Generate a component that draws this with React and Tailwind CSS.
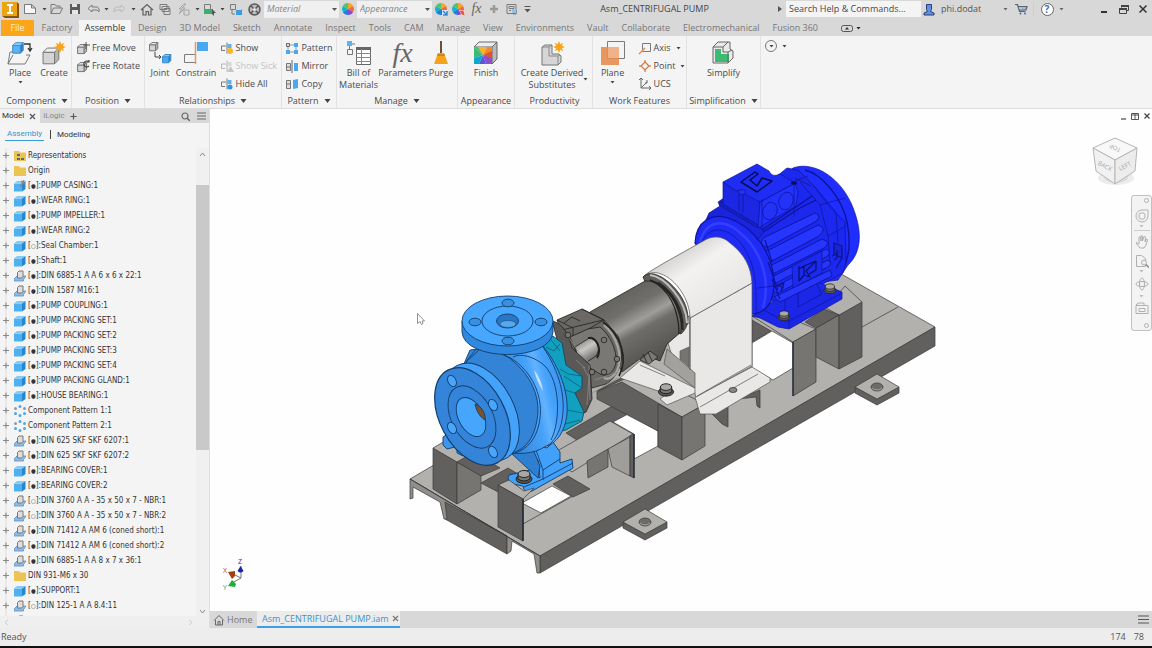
import React from "react";

const UI = "font-['Open_Sans','Noto_Sans',sans-serif]";

/* ---------- small helpers ---------- */
function Svg({ w, h, children, className = "" }) {
  return (
    <svg width={w} height={h} viewBox={`0 0 ${w} ${h}`} fill="none" className={`shrink-0 ${className}`} aria-hidden="true">
      {children}
    </svg>
  );
}

function Caret({ small, color = "#444" }) {
  return small ? (
    <Svg w={5} h={3}><path d="M0.500 0h4L2.500 2.500z" fill={color} /></Svg>
  ) : (
    <Svg w={7} h={4}><path d="M0.500 0h6L3.500 4z" fill={color} /></Svg>
  );
}

function Tool({ label, className, children }) {
  return (
    <button type="button" aria-label={label} className={`flex h-full shrink-0 items-center justify-center ${className}`}>
      {children}
    </button>
  );
}

function Wheel({ badge }) {
  return (
    <Svg w={14} h={14}>
      <path d="M7 7 7 1A6 6 0 0 1 12.200 4z" fill="#f6a623" />
      <path d="M7 7 12.200 4A6 6 0 0 1 12.200 10z" fill="#ee6a3c" />
      <path d="M7 7 12.200 10A6 6 0 0 1 7 13z" fill="#7d4bd0" />
      <path d="M7 7 7 13A6 6 0 0 1 1.800 10z" fill="#1f7fe0" />
      <path d="M7 7 1.800 10A6 6 0 0 1 1.800 4z" fill="#12b3c4" />
      <path d="M7 7 1.800 4A6 6 0 0 1 7 1z" fill="#52c46c" />
      {badge === "blue" && <path d="M8 8h6v6H8z" fill="#d9e8f5" />}
      {badge === "blue" && <path d="M9 9l4 4M13 9v4H9" stroke="#2f8ad6" strokeWidth="1.500" />}
      {badge === "red" && <path d="M8 8l5 1 1 5-3-1z" fill="#e8542f" stroke="#fff" strokeWidth="0.500" />}
    </Svg>
  );
}

const g = "#7a7a7a";

/* ---------- title bar ---------- */
function TitleSelect({ label }) {
  return (
    <div className="relative h-[17px] w-[75px] shrink-0">
      <select aria-label={label} className="block h-full w-full appearance-none bg-[#f0f0f0] pl-[3px] text-[9px] leading-4 text-[#858585] italic">
        <option>{label}</option>
      </select>
      <span className="pointer-events-none absolute top-[7px] right-[2px]"><Svg w={5} h={3}><path d="M0 0h5L2.500 3z" fill="#555" /></Svg></span>
    </div>
  );
}

function TitleBar() {
  return (
    <header className="flex h-[18px] shrink-0 items-center">
      <Tool label="Inventor" className="w-5">
        <Svg w={18} h={18}>
          <path d="M1 2h15v14H1z" fill="#eda414" />
          <path d="M16 2l2 2v14H4l-3-2h15z" fill="#8a5406" />
          <path d="M6 4h6v2h-2v6h2v2H6v-2h2V6H6z" fill="#fff" />
        </Svg>
      </Tool>
      <Tool label="New" className="w-5"><Svg w={14} h={12}><path d="M1.500 1.500h7l4 3.500v5.500h-11zM8.500 1.500v3.500h4" stroke={g} fill="#f7f7f7" /></Svg></Tool>
      <Tool label="New options" className="w-2"><Caret small /></Tool>
      <Tool label="Open" className="w-4"><Svg w={13} h={12}><path d="M1 10.500v-9h4l1 1.500h4v2M1 10.500l2.500-5.500h9L10 10.500z" stroke={g} /></Svg></Tool>
      <Tool label="Save" className="w-[22px]"><Svg w={12} h={12}><path d="M1 1h10v10H1z" fill="#5c5c5c" /><path d="M3 1h5v3H3zM3 7h6v4H3z" fill="#e6e6e6" /></Svg></Tool>
      <Tool label="Undo" className="w-[15px]"><Svg w={13} h={10}><path d="M5 1 1 4.500 5 8V6h5l2 2V5l-1.500-2H5z" stroke={g} /></Svg></Tool>
      <Tool label="Undo options" className="w-[10px]"><Caret small /></Tool>
      <Tool label="Redo" className="w-[17px]"><Svg w={13} h={10}><path d="M8 1l4 3.500L8 8V6H3L1 8V5l1.500-2H8z" stroke="#bababa" /></Svg></Tool>
      <Tool label="Redo options" className="w-[10px]"><Caret small /></Tool>
      <Tool label="Home" className="w-[18px]"><Svg w={14} h={13}><path d="M1 7 7 1.500 13 7M3 6v6h3V8.500h2.500V12H11V6" stroke="#5f5f5f" strokeWidth="1.200" /></Svg></Tool>
      <Tool label="Documents" className="w-[18px]"><Svg w={12} h={12}><path d="M1 1.500h7v5H1zM3 3.500h7v5H3zM5 5.500h6v6H5z" stroke={g} fill="#dedede" /></Svg></Tool>
      <Tool label="Update" className="w-[18px]"><Svg w={13} h={13}><path d="M7 1 2 6h3L2 11l6-6H5l4-4z" stroke="#a5a5a5" /><path d="M7 7h5v5H7z" stroke="#a5a5a5" /></Svg></Tool>
      <Tool label="Update options" className="w-[10px]"><Caret small /></Tool>
      <Tool label="Select" className="w-[15px]"><Svg w={13} h={13}><path d="M1.500 1.500h6v9h-6z" stroke={g} /><path d="M1 6h9v5H1z" fill="#3bb06c" /><path d="M9 6l4 4-2 0 0 3-2-2z" fill="#555" /></Svg></Tool>
      <Tool label="Select options" className="w-[10px]"><Caret small /></Tool>
      <Tool label="Return" className="w-[18px]"><Svg w={14} h={13}><path d="M1.500 1.500h5v5h-5zM3 7v4h3" stroke={g} /><path d="M7 7h5l1-1v6H7z" fill="#3b9be0" /></Svg></Tool>
      <Tool label="Material browser" className="w-[19px]"><Svg w={13} h={13}><circle cx="6.500" cy="6.500" r="5.500" stroke="#5a5a5a" strokeWidth="1.500" fill="#bdbdbd" /><path d="M3 3l7 7M10 3l-7 7" stroke="#5a5a5a" strokeWidth="1.500" /><circle cx="6.500" cy="6.500" r="1.500" fill="#eee" /></Svg></Tool>
      <TitleSelect label="Material" />
      <Tool label="Appearance browser" className="w-[18px]"><Wheel /></Tool>
      <TitleSelect label="Appearance" />
      <Tool label="Adjust" className="w-[17px]"><Wheel badge="blue" /></Tool>
      <Tool label="Clear" className="w-[18px]"><Wheel badge="red" /></Tool>
      <Tool label="Parameters" className="w-[19px]"><span className="font-['Liberation_Serif',serif] text-[14px] leading-4 text-[#666] italic">fx</span></Tool>
      <Tool label="Add" className="w-4"><Svg w={10} h={10}><path d="M5 1v8M1 5h8" stroke="#9a9a9a" strokeWidth="2.500" /></Svg></Tool>
      <Tool label="Snap" className="w-[19px]"><Svg w={12} h={12}><path d="M1 1.500h9v9H1zM3 3.500h5v2H3zM3 7.500h2M10 7v4H7" stroke={g} /><path d="M6 6h4v4H6z" fill="#8fc3ec" /></Svg></Tool>
      <Tool label="Customize" className="w-3"><Svg w={7} h={7}><path d="M0.500 0h6v1h-6zM0.500 3h6l-3 3.500z" fill="#555" /></Svg></Tool>

      <h1 className="min-w-0 flex-1 truncate text-center text-[9px] leading-4 text-[#444]">Asm_CENTRIFUGAL PUMP</h1>

      <Tool label="Show search" className="mr-[2px] w-2"><Svg w={4} h={6}><path d="M0 0l4 3-4 3z" fill="#555" /></Svg></Tool>
      <input aria-label="Search Help and Commands" placeholder="Search Help & Commands..." className="h-4 w-[135px] shrink-0 bg-[#f4f4f4] pl-[3px] text-[9px] leading-4 placeholder:text-[#4a4a4a]" />
      <Tool label="Account" className="w-4">
        <Svg w={12} h={13}><path d="M3.500 1.500h5v5l-1 2 3.500 1.500v2H1v-2l3.500-1.500-1-2z" fill="#5f8fe6" stroke="#27406f" /></Svg>
      </Tool>
      <span className="w-[60px] shrink-0 pl-1 text-[9px] leading-4 text-[#555]">phi.dodat</span>
      <Tool label="Account options" className="w-4"><Caret small color="#666" /></Tool>
      <Tool label="App store" className="w-4"><Svg w={13} h={12}><path d="M0 1.500h2.500l2 7h6M3 3.500h9l-1 3.500H4" stroke="#5a6572" strokeWidth="1.200" fill="#a9b9ca" /><circle cx="5.500" cy="10.500" r="1" fill="#3f6fa8" /><circle cx="10" cy="10.500" r="1" fill="#3f6fa8" /></Svg></Tool>
      <span className="mx-1 h-3 w-px shrink-0 bg-[#cdcdcd]" />
      <Tool label="Help" className="w-[18px]">
        <span className="flex h-[13px] w-[13px] items-center justify-center rounded-full border border-[#666] bg-white text-[10px] leading-3 font-bold text-[#3b70c0]">?</span>
      </Tool>
      <Tool label="Help options" className="w-[10px]"><Caret small color="#666" /></Tool>
      <Tool label="Minimize" className="ml-7 w-[20px]"><Svg w={6} h={8}><path d="M0 6h6v2H0z" fill="#333" /></Svg></Tool>
      <Tool label="Restore" className="w-[19px]"><Svg w={10} h={9}><path d="M2.500 2.500v-2h7v5h-2M0.500 3.500h7v5h-7z" stroke="#444" /><path d="M2 0h8v2H2zM0 3h8v2H0z" fill="#444" /></Svg></Tool>
      <Tool label="Close" className="w-[19px]"><Svg w={8} h={8}><path d="M0.500 0.500l7 7M7.500 0.500l-7 7" stroke="#333" strokeWidth="1.500" /></Svg></Tool>
    </header>
  );
}

/* ---------- ribbon tabs ---------- */
const TABS = ["Design", "3D Model", "Sketch", "Annotate", "Inspect", "Tools", "CAM", "Manage", "View", "Environments", "Vault", "Collaborate", "Electromechanical", "Fusion 360"];

function RibbonTabs() {
  return (
    <nav className="flex h-[18px] shrink-0 items-stretch pt-[2px] pl-[1px] text-[9px] leading-4 text-[#777]">
      <button type="button" className="mr-[1px] w-[33px] bg-[#fba51a] text-[#fff0d0]">File</button>
      <button type="button" className="w-[44px]">Factory</button>
      <button type="button" className="mr-[1px] w-[52px] bg-[#f4f4f4] text-[#333]">Assemble</button>
      {TABS.map((t) => (
        <button type="button" key={t} className="pr-[7px] pl-[6px] whitespace-nowrap">{t}</button>
      ))}
      <Tool label="Ribbon display" className="ml-4 w-3"><Svg w={12} h={7}><rect x="0.500" y="0.500" width="11" height="6" rx="2" stroke="#555" /><path d="M4 4.500h4L6 2z" fill="#333" /></Svg></Tool>
      <Tool label="Ribbon options" className="w-3"><Caret small color="#222" /></Tool>
    </nav>
  );
}

/* ---------- ribbon ---------- */
function Cube({ x = 0, y = 0, s = 1, f = "#d4d4d4", t = "#ededed", d = "#b5b5b5", k = "#777" }) {
  return (
    <g transform={`translate(${x} ${y}) scale(${s})`} stroke={k} strokeWidth={1 / s} strokeLinejoin="round">
      <path d="M1 5h11v11H1z" fill={f} /><path d="M1 5l4-4h11l-4 4z" fill={t} /><path d="M12 5l4-4v11l-4 4z" fill={d} />
    </g>
  );
}
const Star = ({ x, y }) => (
  <path transform={`translate(${x} ${y})`} d="M0-6l1.300 3.200 3-1.500-1.500 3L6 0 2.800 1.300l1.500 3-3-1.500L0 6l-1.300-3.200-3 1.500 1.500-3L-6 0l3.200-1.300-1.500-3 3 1.500z" fill="#f9a51b" />
);

function Panel({ title, caret, className, children }) {
  return (
    <section className={`flex shrink-0 flex-col border-r border-[#e2e2e2] ${className}`}>
      <div className="flex flex-1 justify-center">{children}</div>
      <div className="flex h-[14px] items-center justify-center gap-[5px] text-[9px] leading-[14px] whitespace-nowrap">
        {title}{caret && <Caret />}
      </div>
    </section>
  );
}
function Big({ lines, caret, className = "", children }) {
  return (
    <button type="button" className={`flex shrink-0 flex-col items-center pt-[3px] text-[9px] leading-3 ${className}`}>
      <span className="mb-[1px] flex h-[27px] items-center">{children}</span>
      {lines.map((l) => <span key={l} className="whitespace-nowrap">{l}</span>)}
      {caret && <span className="mt-[2px]"><Caret small /></span>}
    </button>
  );
}
function Rows({ items, className = "" }) {
  return (
    <div className={`flex shrink-0 flex-col pt-[3px] ${className}`}>
      {items.map(([label, icon, off, caret]) => (
        <button type="button" key={label} disabled={off} className="flex h-[18px] items-center gap-[2px] text-[9px] leading-4 whitespace-nowrap disabled:text-[#c4c4c4]">
          <Svg w={14} h={14}>{icon}</Svg>{label}{caret && <span className="ml-[3px]"><Caret small /></span>}
        </button>
      ))}
    </div>
  );
}
const Rel = ({ c }) => (
  <g opacity={c === "off" ? 0.5 : 1}>
    <path d="M6 5H1.500v4.500H5M7 1.500v11" stroke="#777" />
    <path d="M7.500 3h4v4h-4z" fill={c === "off" ? "#bbb" : "#62b1ea"} />
    {c === "show" && <circle cx="10" cy="10" r="3" fill="#f9b52b" />}
    {c === "off" && <path d="M7 13l3.500-6L14 13z" fill="#999" />}
    {c === "hide" && <circle cx="10" cy="10" r="2.500" fill="#2f95de" />}
  </g>
);

function Ribbon() {
  return (
    <div className="flex h-[73px] shrink-0 overflow-hidden border-b border-[#dcdcdc] bg-[#f4f4f4] text-[#4a4a4a]">
      <Panel title="Component" caret className="w-[72px] pl-[3px]">
        <Big lines={["Place"]} caret className="w-[34px]">
          <Svg w={26} h={26}><path d="M7 12H3L1 24h17l5-9h-4" stroke={g} /><path d="M1 24 6 15" stroke={g} /><Cube x={5} y={2} s={0.7} f="#5cb3f0" t="#8fd0fa" d="#2980cc" k="#3b8fd0" /><path d="M17 4h6v6M21 8l2 3 2-3" stroke="#333" strokeWidth="1.300" /></Svg>
        </Big>
        <Big lines={["Create"]} className="w-[34px]">
          <Svg w={26} h={26}><Cube x={1} y={7} s={1.05} /><Star x={19} y={7} /></Svg>
        </Big>
      </Panel>
      <Panel title="Position" caret className="w-[73px]">
        <Rows items={[
          ["Free Move", <g key="i"><Cube x={1} y={3} s={0.6} /><path d="M10 1v7M7 4h7" stroke="#555" /></g>],
          ["Free Rotate", <g key="i"><Cube x={1} y={3} s={0.6} /><path d="M13 3a3 3 0 1 0 0 4M13 1v2h-2" stroke="#444" strokeWidth="1.200" /></g>],
        ]} />
      </Panel>
      <Panel title="Relationships" caret className="w-[137px]">
        <Big lines={["Joint"]} className="w-[29px]">
          <Svg w={24} h={26}><Cube x={1} y={2} s={0.55} /><Cube x={14} y={14} s={0.55} f="#4aa9ee" t="#86cbf8" d="#2980cc" k="#3b8fd0" /><path d="M7 12v5h6M11 15l2 2-2 2" stroke="#444" /></Svg>
        </Big>
        <Big lines={["Constrain"]} className="w-[43px]">
          <Svg w={26} h={26}><path d="M1.500 14.500h11v8h-11z" stroke={g} /><path d="M14 2h11v9H14z" fill="#4aa9ee" /><path d="M12.500 2v22" stroke="#e2986d" strokeWidth="1.500" /></Svg>
        </Big>
        <Rows className="w-[63px] pl-[2px]" items={[
          ["Show", <Rel key="i" c="show" />], ["Show Sick", <Rel key="i" c="off" />, true], ["Hide All", <Rel key="i" c="hide" />],
        ]} />
      </Panel>
      <Panel title="Pattern" caret className="w-[55px]">
        <Rows items={[
          ["Pattern", <g key="i" fill="#4aa9ee"><path d="M1.500 2.500h3v3h-3z" fill="#ddd" stroke="#666" /><path d="M9 2h4v4H9zM1 9h4v4H1zM9 9h4v4H9z" /><path d="M5 4h4M3 6v3M11 6v3M5 11h4" stroke="#999" /></g>],
          ["Mirror", <g key="i"><path d="M1.500 4.500h4v7h-4zM1 8h4" stroke="#777" fill="#ddd" /><path d="M7 1v13" stroke="#666" /><path d="M9 4h4v8H9z" fill="#4aa9ee" /></g>],
          ["Copy", <g key="i"><path d="M1.500 3.500h4v8h-4zM1 7h4" stroke="#777" fill="#ddd" /><path d="M8 3l5-1v9l-5 1z" fill="#4aa9ee" /></g>],
        ]} />
      </Panel>
      <Panel title="Manage" caret className="w-[121px]">
        <Big lines={["Bill of", "Materials"]} className="w-[42px]">
          <Svg w={26} h={26}><path d="M1 1h5v5H1z" fill="#5fb2ec" /><path d="M1.500 9.500h5v5h-5zM6 4h3M3.500 6v3" stroke="#777" /><path d="M10.500 7.500h14v17h-14z" fill="#fff" stroke="#666" /><path d="M10 7h15v3H10z" fill="#666" /><path d="M10 13.500h15M10 17.500h15M10 21.500h15M15.500 9v15" stroke="#888" /></Svg>
        </Big>
        <Big lines={["Parameters"]} className="w-[46px]"><span className="font-['Liberation_Serif',serif] text-[28px] leading-6 text-[#666] italic">fx</span></Big>
        <Big lines={["Purge"]} className="w-[31px]">
          <Svg w={16} h={26}><path d="M7 1h2v13H7z" fill="#6a5230" /><path d="M5 13h6l4 11H1z" fill="#f5a31d" /><path d="M4 15h8" stroke="#b06a10" /></Svg>
        </Big>
      </Panel>
      <Panel title="Appearance" className="w-[57px]">
        <Big lines={["Finish"]}>
          <Svg w={26} h={26}>
            <path d="M1 7l5-5h18l-5 5z" fill="#eee" stroke="#666" /><path d="M19 7l5-5v17l-5 5z" fill="#bbb" stroke="#666" />
            <path d="M1 7h9v8z" fill="#4fc07a" /><path d="M1 7v11l9-3z" fill="#3fb878" /><path d="M10 7h-5l5 8 4-8z" fill="#f6b52b" /><path d="M14 7h5v5l-9 3z" fill="#f08a2c" /><path d="M19 11v8l-9-4z" fill="#e5502f" /><path d="M19 18v6h-6l-3-9z" fill="#8a4fd0" /><path d="M13 24H6l4-9z" fill="#5b55d8" /><path d="M6 24H1v-6l9-3z" fill="#12a5cf" />
          </Svg>
        </Big>
      </Panel>
      <Panel title="Productivity" className="w-[78px] pl-[2px]">
        <div className="flex items-center">
          <Big lines={["Create Derived", "Substitutes"]} className="h-full">
            <Svg w={26} h={26}><path d="M3 7l3-2h7v9h7l2 2v6l-3 3H3z" fill="#d6d6d6" stroke="#777" strokeLinejoin="round" /><path d="M3 7h7v9h9v9M10 7l3-2M19 16l2-1" stroke="#888" /><Star x={20} y={7} /></Svg>
          </Big>
          <span className="mt-7"><Caret small /></span>
        </div>
      </Panel>
      <Panel title="Work Features" className="w-[94px]">
        <Big lines={["Plane"]} caret className="w-[38px]">
          <Svg w={26} h={26}><path d="M7.500 1.500h17v17h-17z" stroke={g} /><path d="M1 7h18v18H1z" fill="#e58d4f" fillOpacity="0.900" /><path d="M8 7h11v11H8z" fill="#f0b389" /></Svg>
        </Big>
        <Rows className="pl-[6px]" items={[
          ["Axis", <g key="i"><path d="M4.500 2.500h8v8h-8z" stroke={g} /><path d="M1 13l6-6" stroke="#e58d4f" strokeWidth="1.500" /></g>, false, true],
          ["Point", <g key="i"><path d="M7 3l4 4-4 4-4-4z" stroke="#c97a45" strokeWidth="1.200" /><path d="M7 1v2M7 11v2M1 7h2M11 7h2" stroke="#e58d4f" strokeWidth="1.500" /></g>, false, true],
          ["UCS", <g key="i"><path d="M3 1v10h10M3 11l6-6M1 3l2-2 2 2M11 9l2 2-2 2" stroke="#666" /><path d="M9 3v3H7" stroke="#666" /></g>],
        ]} />
      </Panel>
      <Panel title="Simplification" caret className="w-[74px]">
        <Big lines={["Simplify"]}>
          <Svg w={24} h={26}><path d="M2 7l5-5h12v7l3 2v7l-5 5H2z" fill="#e9e9e9" stroke="#666" strokeLinejoin="round" /><path d="M4 9h6v5h8v8H4z" fill="#3dbb70" /><path d="M2 7h10v5h5v11M12 7l5-5M17 12l4-2" stroke="#666" /></Svg>
        </Big>
      </Panel>
      <div className="flex h-5 items-center gap-[5px] pl-1">
        <button type="button" aria-label="More panels" className="flex h-[12px] w-[12px] items-center justify-center rounded-full border border-[#777]"><Caret small /></button>
        <Caret small />
      </div>
    </div>
  );
}

/* ---------- browser tree ---------- */
const TREE = [
  ["rep", "Representations"], ["dir", "Origin"], ["pin", "[●]:PUMP CASING:1"], ["part", "[●]:WEAR RING:1"],
  ["part", "[●]:PUMP IMPELLER:1"], ["part", "[●]:WEAR RING:2"], ["part", "[○]:Seal Chamber:1"], ["part", "[●]:Shaft:1"],
  ["std", "[●]:DIN 6885-1 A A 6 x 6 x 22:1"], ["std", "[●]:DIN 1587 M16:1"], ["part", "[●]:PUMP COUPLING:1"],
  ["part", "[●]:PUMP PACKING SET:1"], ["part", "[●]:PUMP PACKING SET:2"], ["part", "[●]:PUMP PACKING SET:3"],
  ["part", "[●]:PUMP PACKING SET:4"], ["part", "[●]:PUMP PACKING GLAND:1"], ["part", "[●]:HOUSE BEARING:1"],
  ["pat", "Component Pattern 1:1"], ["pat", "Component Pattern 2:1"], ["std", "[●]:DIN 625 SKF SKF 6207:1"],
  ["std", "[●]:DIN 625 SKF SKF 6207:2"], ["part", "[●]:BEARING COVER:1"], ["part", "[●]:BEARING COVER:2"],
  ["std", "[○]:DIN 3760 A A - 35 x 50 x 7 - NBR:1"], ["std", "[○]:DIN 3760 A A - 35 x 50 x 7 - NBR:2"],
  ["std", "[●]:DIN 71412 A AM 6 (coned short):1"], ["std", "[●]:DIN 71412 A AM 6 (coned short):2"],
  ["std", "[●]:DIN 6885-1 A A 8 x 7 x 36:1"], ["dir", "DIN 931-M6 x 30"], ["part", "[●]:SUPPORT:1"],
  ["std", "[○]:DIN 125-1 A A 8.4:11"], ["std", ""],
];

function NodeLabel({ text }) {
  if (!text.startsWith("[")) return <span>{text}</span>;
  return (
    <span>[<span className="inline-block w-[5px] text-center text-[6px]">{text[1]}</span>{text.slice(2)}</span>
  );
}

function NodeIcon({ kind }) {
  return (
    <Svg w={12} h={12}>
      {(kind === "dir" || kind === "rep") && <path d="M0 1h5l1 1.500h6V11H0z" fill="#ecc454" />}
      {kind === "rep" && <path d="M3 4h3v2H3zM3 8h3v2H3zM7 8h3v2H7z" fill="#4d6d8c" />}
      {(kind === "part" || kind === "pin") && (
        <g><path d="M0 3.500h8v8H0z" fill="#4fb0f0" /><path d="M0 3.500L3 1h8.500L8 3.500z" fill="#86cbf5" /><path d="M8 3.500L11.500 1v8L8 11.500z" fill="#2387d4" /></g>
      )}
      {kind === "pin" && <path d="M7 1l4 3M10 0l-2 4-2 3" stroke="#888" strokeWidth="1.500" />}
      {kind === "std" && (
        <g><path d="M0 9l3-3h9l-2.500 3.500v1.500H0z" fill="#8dbbe8" stroke="#5d8fc2" strokeWidth="0.800" /><path d="M3.500 2.500l1.500-1.500h4v5.500l-1.500 1.500h-4z" fill="#dedede" stroke="#777" /></g>
      )}
      {kind === "pat" && (
        <g fill="#4fa7e6"><circle cx="6" cy="1.500" r="1.500" /><circle cx="10.500" cy="3.500" r="1.500" /><circle cx="10.500" cy="8.500" r="1.500" /><circle cx="6" cy="10.500" r="1.500" /><circle cx="1.500" cy="8.500" r="1.500" /><circle cx="1.500" cy="3.500" r="1.500" fill="#999" /></g>
      )}
    </Svg>
  );
}

function Browser() {
  return (
    <aside className="flex w-[210px] shrink-0 flex-col border-r border-[#dedede] bg-[#f4f4f4] text-[#333]">
      <div className="flex h-[14px] shrink-0 items-stretch bg-[#d8d8d8] font-[Roboto,sans-serif] text-[8px] leading-[14px]">
        <button type="button" className="flex items-center gap-[5px] bg-[#f2f2f2] pr-1 pl-[2px]">Model
          <Svg w={7} h={7}><path d="M1 1l5 5M6 1L1 6" stroke="#555" strokeWidth="1.200" /></Svg>
        </button>
        <button type="button" className="px-[3px] text-[#888]">iLogic</button>
        <Tool label="Add panel" className="w-3"><Svg w={7} h={7}><path d="M3.500 0.500v6M0.500 3.500h6" stroke="#555" strokeWidth="1.200" /></Svg></Tool>
        <span className="flex-1" />
        <Tool label="Search" className="w-4"><Svg w={9} h={9}><circle cx="4" cy="4" r="3" stroke="#666" strokeWidth="1.200" /><path d="M6 6l3 3" stroke="#666" strokeWidth="1.500" /></Svg></Tool>
        <Tool label="Panel menu" className="w-4"><Svg w={9} h={8}><path d="M0 1h9M0 4h9M0 7h9" stroke="#666" strokeWidth="1.200" /></Svg></Tool>
      </div>
      <div className="flex h-[25px] shrink-0 items-center gap-[6px] pb-[2px] pl-[5px] font-[Roboto,sans-serif] text-[8px] leading-3">
        <button type="button" className="border-b border-[#3a9ad6] px-[2px] text-[#2f95d3]">Assembly</button>
        <span className="h-[9px] w-px bg-[#444]" />
        <button type="button">Modeling</button>
      </div>
      <div className="flex min-h-0 flex-1">
        <ul className="min-w-0 flex-1 overflow-hidden font-['DejaVu_Sans_Condensed','DejaVu_Sans',sans-serif] text-[8px] leading-[15px]">
          {TREE.map(([kind, label], i) => (
            <li key={i} className="flex h-[15px] items-center whitespace-nowrap">
              <button type="button" aria-label="Expand" className="mr-[5px] ml-[3px]"><Svg w={6} h={15}><path d="M3 0v4M3 11v4" stroke="#ddd" /><path d="M3 4.500v6M0 7.500h6" stroke="#888" strokeWidth="1.200" /></Svg></button>
              <NodeIcon kind={kind} /><span className="ml-[2px]"><NodeLabel text={label} /></span>
            </li>
          ))}
        </ul>
        <div className="flex w-[13px] shrink-0 flex-col items-center bg-[#f0f0f0] pt-1 pb-[2px]">
          <Svg w={7} h={5}><path d="M1 4l2.500-3L6 4" stroke="#888" /></Svg>
          <span className="mt-7 h-[265px] w-full bg-[#c9c9c9]" />
          <Svg w={7} h={5} className="mt-auto"><path d="M1 1l2.500 3L6 1" stroke="#888" /></Svg>
        </div>
      </div>
      <div className="flex h-[12px] shrink-0 items-center justify-between bg-[#efefef] pr-4 pl-1">
        <Svg w={5} h={7}><path d="M4 1L1 3.500 4 6" stroke="#ccc" /></Svg>
        <Svg w={5} h={7}><path d="M1 1l3 2.500L1 6" stroke="#ccc" /></Svg>
      </div>
    </aside>
  );
}

/* ---------- model ---------- */
const L = "#b3b1ae", M = "#777572", D = "#62605e", W = "#e9e8e6";
const BASE = [
  [L, "410,479 650,338 800,254 843,275 935,327 540,556"],
  [D, "540,556 935,327 935,346 540,573"],
  [D, "443,499 507,536 507,554 445,519"],
  ["#918f8c", "410,479 410,499 413,498 413,487 440,502 444,519 447,519 445,502 507,536 507,554 511,551 512,541 534,554 537,573 540,573 540,556"],
  [D, "481,483 508,468 528,480 500,493"],
  [D, "553,484 568,476 590,489 573,497"],
  ["#fefefe", "522,503 552,486 571,496 541,513"],
  [D, "566,433 614,405 628,415 580,442"],
  ["#fefefe", "613,422 628,414 658,431 658,446 634,459 634,434"],
  [D, "752,320 771,331 752,342"],
  ["#fefefe", "752,343 772,331 793,343 793,368 773,380 752,368"],
];
const BLOCKS = [
  [D, "433,448 457,462 457,504 433,489"], [M, "457,462 481,475 481,490 457,504"], [L, "433,448 445,441 475,452 481,475 457,462"],
  [D, "457,462 474,452 500,468 481,476"],
  [L, "550,455 610,421 633,434 572,472"], [M, "587,461 608,449 608,467 588,478"], ["#a09e9b", "608,449 630,437 630,476 612,467"], [D, "630,436 634,434 634,478 630,476"],
  [D, "597,391 621,378 682,417 682,440 658,431 597,399"], [L, "598,391 640,372 705,404 682,417 622,382"],
  [D, "658,404 682,417 682,460 658,447"], [M, "682,417 705,404 705,446 682,460"],
  [L, "752,316 775,312 816,329 793,342"], [M, "793,342 816,329 816,382 793,396"],
  [M, "816,328 839,315 839,369 816,357"], [D, "839,315 862,302 862,357 839,369"], [L, "826,308 845,286 862,302 839,315"], [D, "805,322 824,309 839,315 816,328"],
  [D, "711,413 728,404 728,427 722,424"], [D, "738,399 760,390 760,408 757,406 756,397"],
];
const COUPLING_GUARD = [
  [W, "695,397 752,367 770,378 770,382 716,414 700,414"],
  [W, "690,318 752,283 752,366 696,397 690,376"],
  [W, "620,378 640,361 695,388 695,393 667,405 660,399 667,394"],
  ["#a3a19e", "667,349 695,373 695,388 664,364"],
];
const Polys = ({ list }) => list.map(([f, p], i) => <polygon key={i} points={p} fill={f} />);

function Bolt({ x, y, s = 1 }) {
  return (
    <g transform={`translate(${x} ${y}) scale(${s})`} strokeWidth="1">
      <ellipse cx="0" cy="3" rx="8" ry="4.500" fill="#555" /><path d="M-6-2v5q6 4 12 0v-5z" fill="#777" /><ellipse cx="0" cy="-2" rx="6" ry="3.500" fill="#aaa8a5" />
    </g>
  );
}
function Pad({ x, y }) {
  return (
    <g transform={`translate(${x} ${y})`}>
      <path d="M-22 0 0 12 22 0v6L0 18-22 6z" fill={D} /><path d="M-22 0 0-13 22 0 0 12z" fill={L} /><ellipse rx="6" ry="4" fill="#6d6b69" /><path d="M-5 1q5 4 10 0" stroke="#bbb" fill="none" />
    </g>
  );
}
const FRONT_HOLES = [[452, 381], [493, 405], [452, 428], [493, 452]];
const TOP_HOLES = [[508, 303], [541, 322], [508, 341], [475, 322]];

function Model() {
  return (
    <svg viewBox="210 109 942 502" className="h-full w-full" role="img" aria-label="Centrifugal pump assembly" strokeLinejoin="round">
      <defs>
        <linearGradient id="steel" gradientUnits="userSpaceOnUse" x1="612" y1="290" x2="652" y2="362">
          <stop offset="0" stopColor="#605e5b" /><stop offset="0.300" stopColor="#716f6c" /><stop offset="0.480" stopColor="#a09e9b" /><stop offset="0.600" stopColor="#6f6d6a" /><stop offset="1" stopColor="#54524f" />
        </linearGradient>
        <linearGradient id="guard" gradientUnits="userSpaceOnUse" x1="675" y1="255" x2="715" y2="315">
          <stop offset="0" stopColor="#d7d5d3" /><stop offset="0.300" stopColor="#f3f2f1" /><stop offset="1" stopColor="#e6e5e3" />
        </linearGradient>
        <linearGradient id="volute" gradientUnits="userSpaceOnUse" x1="505" y1="400" x2="568" y2="385">
          <stop offset="0" stopColor="#3387da" /><stop offset="0.450" stopColor="#47a2fa" /><stop offset="0.580" stopColor="#62b3ff" /><stop offset="0.700" stopColor="#45a2fb" /><stop offset="1" stopColor="#3891ea" />
        </linearGradient>
        <linearGradient id="shaft" x1="0" y1="0" x2="0.500" y2="1"><stop offset="0" stopColor="#666" /><stop offset="0.500" stopColor="#c9c7c4" /><stop offset="1" stopColor="#555" /></linearGradient>
      </defs>

      <g stroke="#3b3a39" strokeWidth="0.700">
        <Polys list={BASE} />
        <path d="M862 327 898 307M523 524 573 496M540 556 410 479" fill="none" />
        <Pad x={877} y={387} /><Pad x={645} y={522} />
        <Polys list={BLOCKS} />
        <path d="M793 342v54M634 434v44" stroke="#1d2735" strokeWidth="1.300" />
      </g>

      {/* motor */}
      <g stroke="#0d1496" strokeWidth="0.700">
        <path d="M793 168C812 161 838 175 851 203C863 230 862 252 848 265L838 280 760 290 745 230z" fill="#1f2dff" />
        <path d="M805 170C822 174 842 198 847 222C851 242 849 258 843 269" fill="none" strokeWidth="1.300" />
        <path d="M787 168 798 170 814 186 829 206 845 222 846 262 843 273 790 302 762 300 748 240 760 190z" fill="#1c28ee" />
        <path d="M800 182 820 205 828 236 830 262M814 186 836 212 838 243M820 205 845 198M828 236 846 226M790 183 808 176M795 178 811 186" fill="none" />
        <path d="M752 316 770 303 800 286 818 282 842 292V299L789 329 778 327 760 318z" fill="#1b26e6" />
        <path d="M752 311 762 309 782 320 789 321 842 293M789 321v7M798 289 798 307 822 294 815 281 798 289 785 300 785 310" fill="none" />
        <g fill="#2636ff" strokeWidth="0.900">
          <path d="M763 238 815 213Q823 216 815 222L768 247Q758 246 763 238z" />
          <path d="M765 252 818 225Q828 228 819 236L770 262Q760 260 765 252z" />
          <path d="M768 267 822 239Q832 242 824 248L775 273Q767 273 768 267z" />
          <path d="M770 278 826 249Q833 252 826 257L776 283Q770 282 770 278z" />
          <path d="M772 288 828 260Q833 263 828 267L778 293Q772 292 772 288z" />
          <path d="M774 297 830 270 832 276 780 302z" />
        </g>
        <path d="M760 234 800 208 816 200M762 230 812 196" fill="none" strokeWidth="1.200" />
        <path d="M792 266 822 251V273L793 288z" fill="#1c2af0" />
        <path d="M799 266v15l5-6 6 2-4-6 10-10v9l-7 4M799 269l5-3v9M816 261l-12 5" fill="none" stroke="#0a0f70" strokeWidth="1.200" />
        <path d="M834 243l8 3v12l-8-4zM832 256l6-3M837 250v8l-3 2" fill="#1b24d0" strokeWidth="1.300" />
        <path d="M706 220 709 213 720 206 718 202 724 198 755 222 764 232 757 240z" fill="#1a24dc" />
        <path d="M695 243C696 220 713 213 728 218C752 226 774 252 774 284C774 302 766 313 752 314z" fill="#1f2bf5" strokeWidth="1.200" />
        <path d="M700 242C706 221 722 218 738 231C762 250 771 280 763 308" fill="none" stroke="#3340ff" strokeWidth="2.500" />
        <path d="M701 244C708 226 724 226 738 240C754 258 757 280 756 313M757 288l17-2" fill="none" />
        <path d="M721 201 758 221V228L719 205z" fill="#1720c0" />
        <path d="M723 182 760 202 760 226 723 204z" fill="#1c27e4" />
        <path d="M760 202 795 183 798 192 796 206 758 228z" fill="#2231fb" />
        <path d="M723 182 757 164 769 171Q772 178 780 174L795 183 760 202 745 194Q741 188 736 191z" fill="#1f2df4" />
        <ellipse cx="770" cy="211" rx="7" ry="9" fill="#2432f8" transform="rotate(20 770 211)" /><ellipse cx="786" cy="201" rx="7" ry="9" fill="#2432f8" transform="rotate(20 786 201)" />
        <path d="M741 182 755 172 758 174 750 180 757 186 762 178 772 181 757 192z" fill="none" stroke="#070b50" strokeWidth="1.500" />
        <path d="M739 194v17M743 195v18M794 183v34M762 199 762 230" fill="none" />
        <ellipse cx="742" cy="192" rx="4" ry="2.500" fill="#2230f0" /><ellipse cx="794" cy="183" rx="3" ry="1.500" fill="#080c50" />
        <path d="M765 240 772 262M768 262 778 290M772 279l8 20M776 285l8 3M836 268l6-10" strokeWidth="1.200" fill="none" />
        <path d="M778 286l5-3M781 291l3-8" strokeWidth="1.500" />
      </g>
      <g stroke="#222"><Bolt x={784} y={315} s={0.75} /><Bolt x={830} y={288} s={0.75} /></g>

      {/* coupling guard */}
      <g stroke="#555351" strokeWidth="0.700">
        <path d="M668 343 690 322 690 376 672 356z" fill={W} /><path d="M680 351l9-4v20l-9-8z" fill={M} />
        <Polys list={COUPLING_GUARD} />
        <path d="M643 277C648 272 656 268 664 263L705 240C712 236 722 235 730 243C744 254 751 266 752 283L690 318C690 300 676 279 661 274C654 271 648 273 643 277z" fill="url(#guard)" />
        <path d="M751 365 697 396M690 318V370M640 365 665 376M758 374 700 407" fill="none" />
        <ellipse cx="733" cy="390" rx="4" ry="2.500" fill="#888" stroke="#222" />
      </g>
      <g stroke="#222"><Bolt x={666} y={389} s={0.95} /></g>

      {/* bearing house */}
      <g stroke="#222120" strokeWidth="0.800">
        <path d="M643 277C652 267 672 281 682 298C690 312 690 326 681 334L664 325z" fill="#605e5b" />
        <path d="M650 275C665 277 686 300 687 323" fill="none" stroke="#c2c0bd" strokeWidth="2" />
        <path d="M650 280C668 286 682 306 682 330" fill="none" strokeWidth="1.500" />
        <path d="M590 312 645 281C664 279 684 310 681 332L667 344 660 361 645 355 622 372 605 340z" fill="url(#steel)" />
        <path d="M652 281C668 289 679 308 679 334M658 282C673 292 684 309 683 330" fill="none" strokeWidth="1.200" />
        <path d="M557 320 582 309 604 320 618 336C626 356 620 376 606 384L592 388 572 360z" fill="#6b6966" />
        <path d="M562 330 603 320M582 309 604 320 580 334M557 320l16 8v10M564 323l8-6 8 4" fill="none" />
        <path d="M570 337 588 329 600 327C610 335 617 350 616 362C614 374 606 377 600 374L580 362z" fill="#7a7875" />
        <path d="M604 325C616 335 624 356 617 371C614 377 608 380 604 378" fill="none" stroke="#a5a3a0" strokeWidth="2.500" />
        <path d="M603 322C620 334 629 358 619 376" fill="none" strokeWidth="1.600" />
        <path d="M575 347 591 337C598 339 601 349 596 356L581 366z" fill="url(#shaft)" />
        <path d="M588 338C597 337 602 349 597 358" fill="none" strokeWidth="2" />
        <path d="M552 321C563 323 569 335 572 348L590 365 592 399 586 412 572 418 560 350z" fill="#5b5957" />
        <path d="M566 333 577 350 589 363M583 367l6 10-2 28M576 360l9 8M589 365 590 400M595 380 618 372M592 393 618 378" fill="none" stroke="#8d8b88" />
        {[[604, 340], [617, 359], [604, 372], [568, 335], [592, 372]].map(([x, y]) => <circle key={`${x}-${y}`} cx={x} cy={y} r="2.800" fill="#777" />)}
        <path d="M640 360l10-9 8 6-9 7zM643 354l4 9M648 352l4 9" fill="#7b7976" />
      </g>

      {/* seal cover */}
      <path d="M540 346 553 336 562 343 566 365 582 376 582 388 575 393 584 412 582 421 566 430 558 432z" fill="#12a0c0" stroke="#07485b" strokeWidth="0.800" />
      <path d="M551 340l9 11M546 347l8 4 6-7M560 369l8 5 14 2M564 376l18 12M565 390l10 3M567 410l16 3M565 424l15-4" stroke="#0a5f77" strokeWidth="0.800" fill="none" />

      {/* pump casing */}
      <g stroke="#123c6b" strokeWidth="0.900">
        <path d="M443 437 448 434 455 440v7l-8 2-4-4zM457 449l6 2v5l-6-3z" fill="#3c96ee" />
        <path d="M512 452 534 444 547 448 553 442 560 452V463L572 459 573 468 532 491Q524 494 523 486L513 484Q506 480 509 475L530 470 540 478 538 460z" fill="#41a0fa" />
        <path d="M512 454 538 478 540 466 532 447z" fill="#2f7fd0" />
        <path d="M543 480V470L560 459M535 447 543 470M524 487 543 479 573 463" fill="none" />
        <path d="M463 366 470 350 510 345 543 346C556 362 569 388 567 414C565 432 556 444 546 446C535 454 515 456 500 450z" fill="url(#volute)" />
        <path d="M466 362 476 349 500 352C528 368 542 395 537 420C534 438 526 449 512 453L488 400z" fill="#3384d6" />
        <path d="M509 357C532 370 545 398 539 424C536 438 528 449 515 453M543 347C560 372 566 398 562 420C560 432 554 442 547 446M513 357C520 353 534 356 545 366C560 382 561 420 551 440" fill="none" />
        <path d="M534 370Q541 378 543 391Q537 382 534 370z" fill="#c6e3ff" stroke="none" />
        <path d="M466 362 480 349 497 352 510 358" fill="none" />
        <path d="M462 321v11C464 362 551 362 553 332v-11z" fill="#3088df" />
        <ellipse cx="507.500" cy="321" rx="45.500" ry="25" fill="#47a6fd" />
        <ellipse cx="507.500" cy="321" rx="25.500" ry="15" fill="none" />
        <ellipse cx="507.500" cy="321" rx="11" ry="7" fill="#2a76c2" /><ellipse cx="508" cy="324" rx="8" ry="3.500" fill="#57a8ee" strokeWidth="0.500" />
        {TOP_HOLES.map(([x, y]) => <ellipse key={`${x}-${y}`} cx={x} cy={y} rx="6" ry="3.800" fill="#3a90e0" />)}
        <ellipse cx="481.500" cy="412" rx="32.500" ry="52.500" transform="rotate(-28 481.500 412)" fill="#44a2fb" />
        <ellipse cx="472.500" cy="416.500" rx="32.500" ry="52.500" transform="rotate(-28 472.500 416.500)" fill="#3485da" strokeWidth="1.200" />
        <ellipse cx="472" cy="417" rx="20.500" ry="33.500" transform="rotate(-28 472 417)" fill="none" />
        <ellipse cx="471" cy="417" rx="12.500" ry="21" transform="rotate(-28 471 417)" fill="#46a5fd" />
        <path d="M475 404C481 406 486 413 485 420Q477 415 475 404z" fill="#7d5326" />
        {FRONT_HOLES.map(([x, y]) => <ellipse key={`${x}-${y}`} cx={x} cy={y} rx="4" ry="6" transform={`rotate(-28 ${x} ${y})`} fill="#49a6fb" />)}
      </g>
      <g stroke="#3b3a39" strokeWidth="0.700">
        <polygon points="498,485 509,480 524,491 534,488 523,499" fill={L} />
        <polygon points="498,485 523,499 523,541 498,527" fill={D} />
        <path d="M523 499v42" stroke="#1d2735" strokeWidth="1.500" />
      </g>
      <g stroke="#222"><Bolt x={524} y={476} s={1} /></g>

      <path d="M417.500 313.500v10l2.500-2 1.500 3 1.500-1-1-2.500h2.500z" fill="#fff" stroke="#777" strokeWidth="0.800" />

      {/* axis triad */}
      <g className="font-['Open_Sans',sans-serif] text-[7px]" fill="none">
        <path d="M241 578V566M241 578l-10-5M241 578l-9 5" stroke="#777" />
        <path d="M237.500 571l3-5 3 5q-3 3-6 0z" fill="#1b25a8" /><path d="M228 572l7-1 0 5-3 3z" fill="#a0400d" /><path d="M228 586l4-6 4 4-1 3z" fill="#1fae3c" />
        <text x="238" y="564" fill="#2b35b8">Z</text><text x="223" y="573" fill="#b0491a">X</text><text x="223" y="590" fill="#2c8f45">Y</text>
      </g>
    </svg>
  );
}

function ViewCube() {
  return (
    <svg width="50" height="56" viewBox="0 0 50 56" className="absolute top-[25px] right-3" role="img" aria-label="View cube">
      <ellipse cx="26" cy="44" rx="18" ry="7" fill="#ececec" /><ellipse cx="26" cy="43" rx="12" ry="6" fill="#dcdcdc" />
      <g stroke="#b5b5b5" strokeLinejoin="round">
        <path d="M3 14 25 4 47 14 25 26z" fill="#f8f8f8" /><path d="M3 14 25 26V50L6 37z" fill="#f1f1f1" /><path d="M25 26 47 14 45 37 25 50z" fill="#ececec" />
      </g>
      <g className="font-['Open_Sans',sans-serif] text-[6px]" fill="#a5a5a5" textAnchor="middle">
        <text transform="translate(26 12) rotate(205)">TOP</text>
        <text transform="translate(14 34) rotate(27)">BACK</text>
        <text transform="translate(36 34) rotate(-29)">LEFT</text>
      </g>
    </svg>
  );
}

const nav = "#b0b0b0";
function NavBar() {
  return (
    <div className="absolute top-[86px] right-0 flex w-[21px] flex-col items-center rounded-[3px] border border-[#c2c2c2] bg-[#f3f3f3] pt-[2px] pb-[2px]">
      <Svg w={5} h={5} className="mr-[2px] self-end"><circle cx="2.500" cy="2.500" r="2" stroke={nav} /></Svg>
      <button type="button" aria-label="Steering wheel" className="flex h-[22px] items-end"><Svg w={14} h={17}><path d="M7 2h6v6a6 6 0 1 1-6-6z" stroke={nav} /><rect x="4" y="5" width="6" height="6" rx="2" stroke={nav} /></Svg></button>
      <Caret small color="#bbb" />
      <span className="mt-[2px] h-px w-4 bg-[#ccc]" />
      <button type="button" aria-label="Pan" className="flex h-[21px] items-center"><Svg w={14} h={15}><path d="M4 9V3q1-1 1.500 0L6 7V2q1-1 1.500 0V7L9 2.500q1-.5 1.500.5L10 8l1.500-3q1 0 1 1L11 11l-2 3H5L1 9q0-1.500 3 1z" stroke={nav} /></Svg></button>
      <button type="button" aria-label="Zoom" className="flex h-[18px] items-center"><Svg w={14} h={14}><path d="M1.500 1.500h5l4 3v8h-9z" stroke={nav} /><circle cx="9" cy="8.500" r="2.500" fill="#eee" stroke={nav} /><path d="M11 10.500l3 3" stroke="#888" strokeWidth="1.500" /></Svg></button>
      <Caret small color="#bbb" />
      <button type="button" aria-label="Orbit" className="flex h-[22px] items-center"><Svg w={14} h={14}><ellipse cx="7" cy="7" rx="6" ry="2.500" stroke={nav} /><ellipse cx="7" cy="7" rx="2.500" ry="6" stroke={nav} /></Svg></button>
      <Caret small color="#bbb" />
      <button type="button" aria-label="Look at" className="flex h-5 items-center"><Svg w={14} h={14}><path d="M1 4.500h12v8H1zM4 7.500h6v3H4zM3 2l-2 2 2 0M3 2h6v2" stroke={nav} /></Svg></button>
      <Svg w={5} h={5} className="mt-[5px] mr-[2px] self-end"><circle cx="2.500" cy="2.500" r="2" stroke={nav} /></Svg>
    </div>
  );
}

export default function App() {
  return (
    <div className={`flex h-screen flex-col overflow-hidden border-b-2 border-[#111] bg-[#d8d8d8] ${UI}`}>
      <TitleBar />
      <RibbonTabs />
      <Ribbon />
      <div className="flex min-h-0 flex-1">
        <Browser />
        <main className="flex min-w-0 flex-1 flex-col">
          <div className="relative min-h-0 flex-1 bg-[#fefefe]">
            <Model />
            <div className="absolute top-[2px] right-0 flex h-[10px] items-center">
              <Tool label="Minimize document" className="w-3"><Svg w={5} h={7}><path d="M0 6h5" stroke="#444" strokeWidth="1.200" /></Svg></Tool>
              <Tool label="Tile documents" className="w-3"><Svg w={8} h={7}><path d="M0.500 0.500h7v6h-7zM4 0.500v6M0 2h8" stroke="#555" /></Svg></Tool>
              <Tool label="Close document" className="w-[11px]"><Svg w={6} h={6}><path d="M0.500 0.500l5 5M5.500 0.500l-5 5" stroke="#444" strokeWidth="1.200" /></Svg></Tool>
            </div>
            <ViewCube />
            <NavBar />
          </div>
          <div className="flex h-[17px] shrink-0 items-stretch bg-[#d8d8d8] text-[9px] leading-[15px]">
            <button type="button" className="flex w-[47px] items-center gap-[2px] pl-[3px] text-[#777]">
              <Svg w={12} h={12}><path d="M1 6.500 6 1.500l5 5M2.500 6v5h7V6M5 11V7.500h2V11" stroke="#666" /></Svg>Home
            </button>
            <button type="button" className="flex w-[143px] items-center gap-[3px] border-b-2 border-[#3b9fe6] bg-[#ececec] pl-[5px] whitespace-nowrap text-[#3a93cc]">
              Asm_CENTRIFUGAL PUMP.iam
              <Svg w={7} h={7}><path d="M1 1l5 5M6 1L1 6" stroke="#777" strokeWidth="1.200" /></Svg>
            </button>
            <span className="flex-1" />
            <Tool label="Document menu" className="w-[18px]"><Svg w={11} h={9}><path d="M0 1h11M0 4.500h11M0 8h11" stroke="#555" strokeWidth="1.200" /></Svg></Tool>
          </div>
        </main>
      </div>
      <footer className="flex h-[18px] shrink-0 items-center bg-[#ededed] pr-2 pl-[1px] text-[9px] leading-4 text-[#555]">
        <span className="flex-1">Ready</span>
        <span className="mr-2">174</span>
        <span>78</span>
      </footer>
    </div>
  );
}
